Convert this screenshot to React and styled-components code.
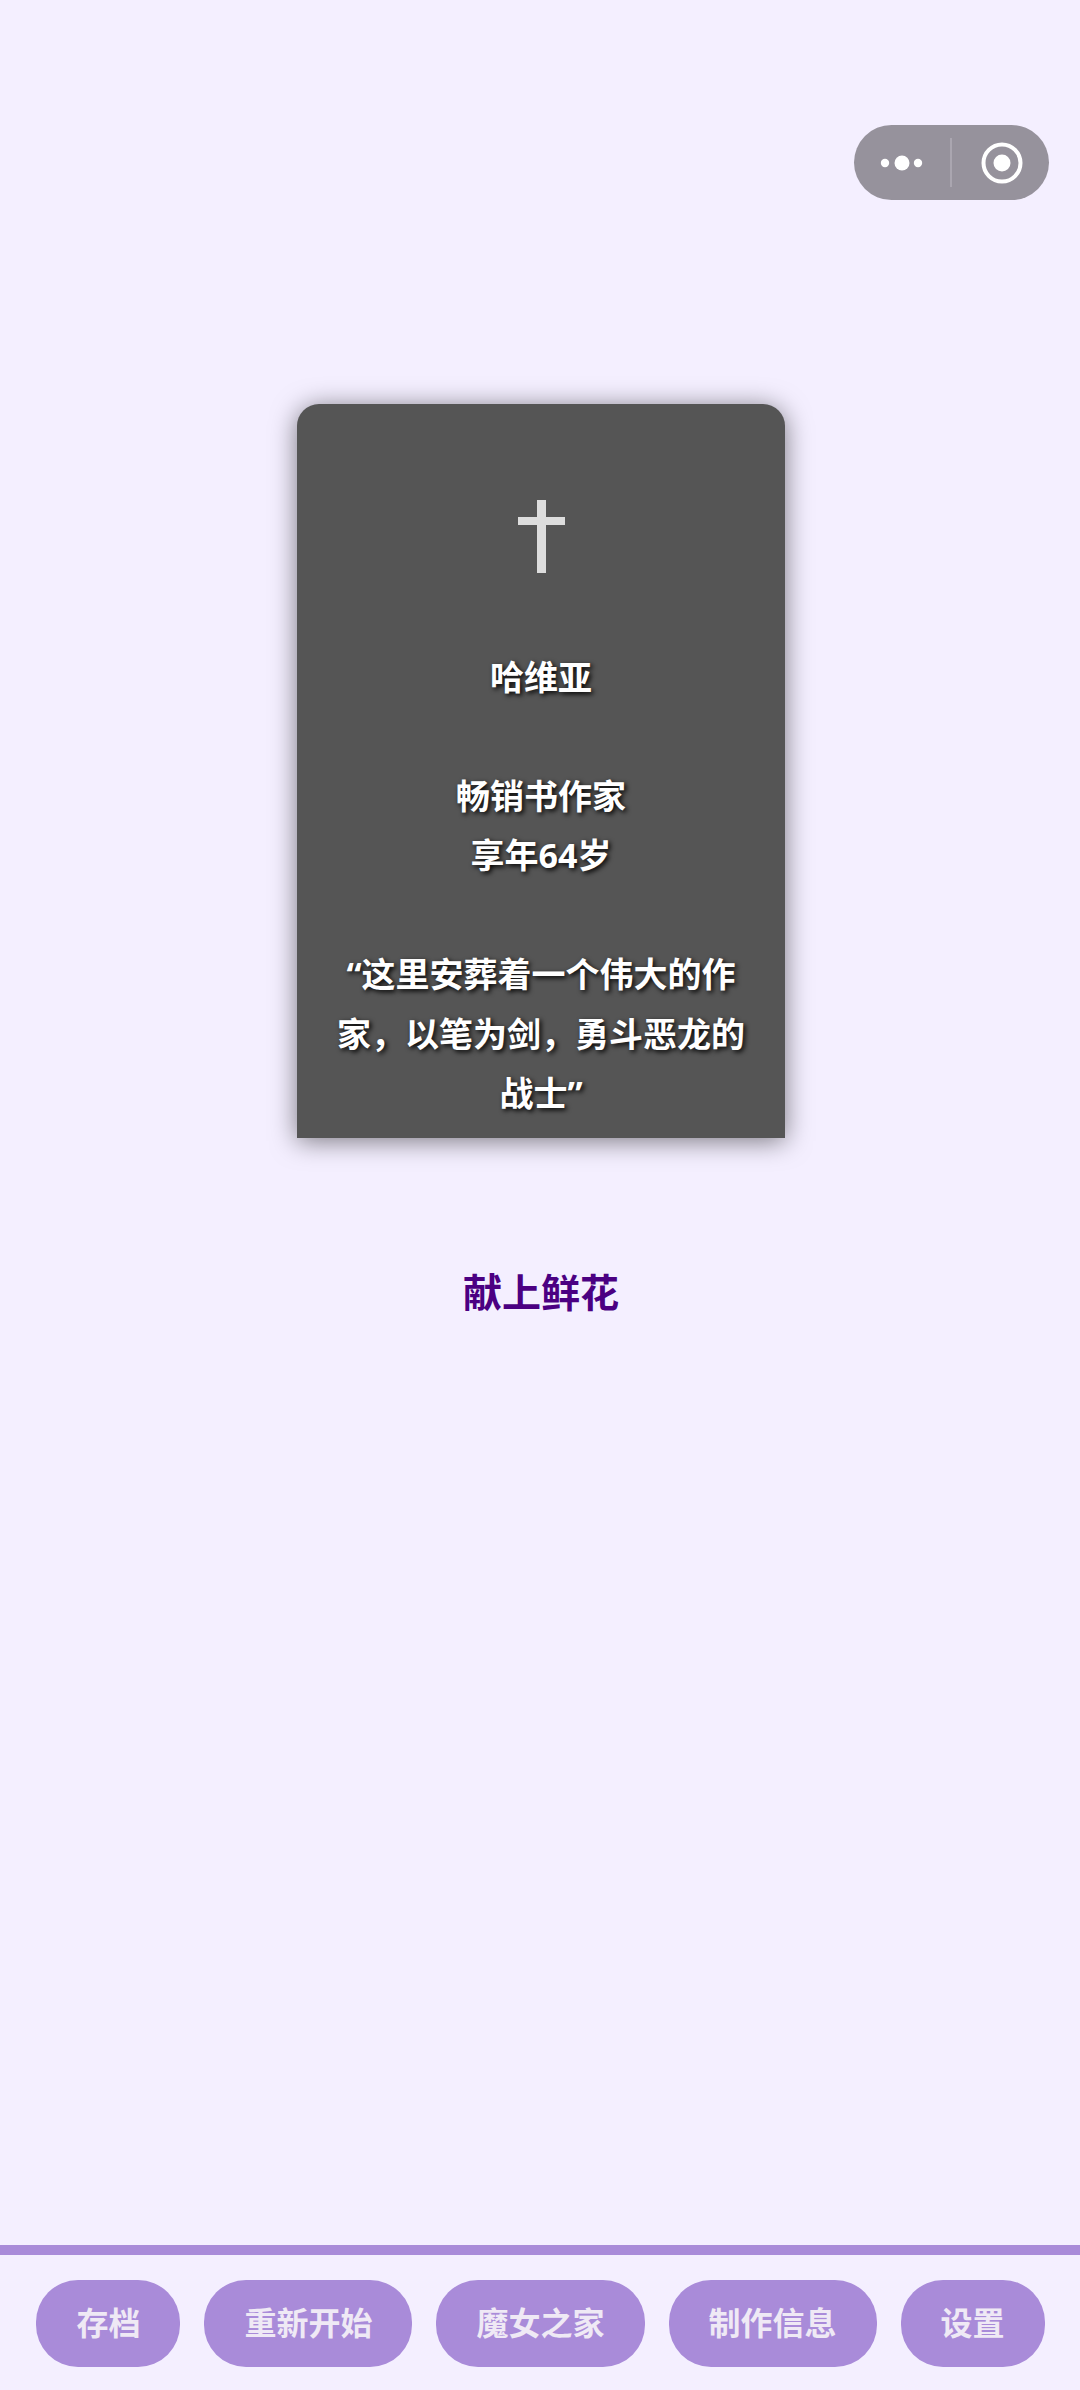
import React from "react";
import styled, { createGlobalStyle } from "styled-components";

const FONT = `"Noto Sans", "Noto Sans CJK SC", sans-serif`;

const menu = ["存档", "重新开始", "魔女之家", "制作信息", "设置"];

function App() {
  return (
    <Page>
      <GlobalStyle />
      <Capsule>
        <svg width="60" height="20" viewBox="0 0 60 20">
          <circle cx="9" cy="10" r="4.2" fill="#fff" />
          <circle cx="26" cy="10" r="7.5" fill="#fff" />
          <circle cx="42" cy="10" r="4.2" fill="#fff" />
        </svg>
        <CapsuleLine />
        <svg width="42" height="42" viewBox="0 0 42 42">
          <circle cx="21" cy="21" r="18.5" fill="none" stroke="#fff" strokeWidth="4" />
          <circle cx="21" cy="21" r="8.5" fill="#fff" />
        </svg>
      </Capsule>
      <Main>
        <Tombstone>
          <Cross width="47" height="73" viewBox="0 0 47 73">
            <path d="M19 0h9v17h19v8H28v48h-9V25H0v-8h19z" fill="#ddd" />
          </Cross>
          <Epitaph>
            <Paragraph>哈维亚</Paragraph>
            <Paragraph>
              畅销书作家
              <br />
              享年64岁
            </Paragraph>
            <Paragraph>“这里安葬着一个伟大的作家，以笔为剑，勇斗恶龙的战士”</Paragraph>
          </Epitaph>
        </Tombstone>
        <FlowerButton>献上鲜花</FlowerButton>
      </Main>
      <BottomBar>
        {menu.map((item) => (
          <MenuButton key={item}>{item}</MenuButton>
        ))}
      </BottomBar>
    </Page>
  );
}

export default App;

const GlobalStyle = createGlobalStyle`
  html, body {
    margin: 0;
    padding: 0;
    background: #f4efff;
  }
`;
const Page = styled.div`
  position: relative;
  width: 1080px;
  height: 2390px;
  display: flex;
  flex-direction: column;
  background: #f4efff;
  font-family: ${FONT};
  overflow: hidden;
`;
const Capsule = styled.div`
  position: absolute;
  top: 125px;
  left: 854px;
  width: 195px;
  height: 75px;
  box-sizing: border-box;
  padding-left: 22px;
  border-radius: 38px;
  background: #96929c;
  display: flex;
  align-items: center;
`;
const CapsuleLine = styled.div`
  width: 2px;
  height: 49px;
  margin: 0 29px 0 14px;
  background: #aaa6b0;
`;
const Main = styled.main`
  flex: 1;
  padding: 404px 0 0 2px;
  display: flex;
  flex-direction: column;
  align-items: center;
`;
const Tombstone = styled.div`
  width: 488px;
  height: 734px;
  box-sizing: border-box;
  padding: 96px 34px 0;
  border-radius: 22px 22px 0 0;
  background: #555;
  box-shadow: 0 3px 26px rgba(0, 0, 0, 0.5);
  display: flex;
  flex-direction: column;
  align-items: center;
`;
const Cross = styled.svg`
  flex-shrink: 0;
`;
const Epitaph = styled.div`
  margin-top: 74.5px;
  width: 100%;
`;
const Paragraph = styled.p`
  margin: 0 0 59.5px;
  color: #fff;
  font-size: 34px;
  font-weight: 700;
  line-height: 59.5px;
  text-align: center;
  text-shadow: 2px 2px 5px #000;

  &:last-child {
    margin-bottom: 0;
  }
`;
const FlowerButton = styled.div`
  margin-top: 122px;
  color: #4b0082;
  font-size: 39px;
  font-weight: 700;
  line-height: 64px;
`;
const BottomBar = styled.nav`
  border-top: 10px solid #a98bd9;
  padding: 25px 0 23px 1px;
  display: flex;
  justify-content: center;
  gap: 24px;
`;
const MenuButton = styled.div`
  height: 87px;
  padding: 0 40px;
  border-radius: 42px;
  background: #a98bd9;
  color: #efe9f5;
  font-size: 32px;
  font-weight: 700;
  line-height: 85px;
`;
